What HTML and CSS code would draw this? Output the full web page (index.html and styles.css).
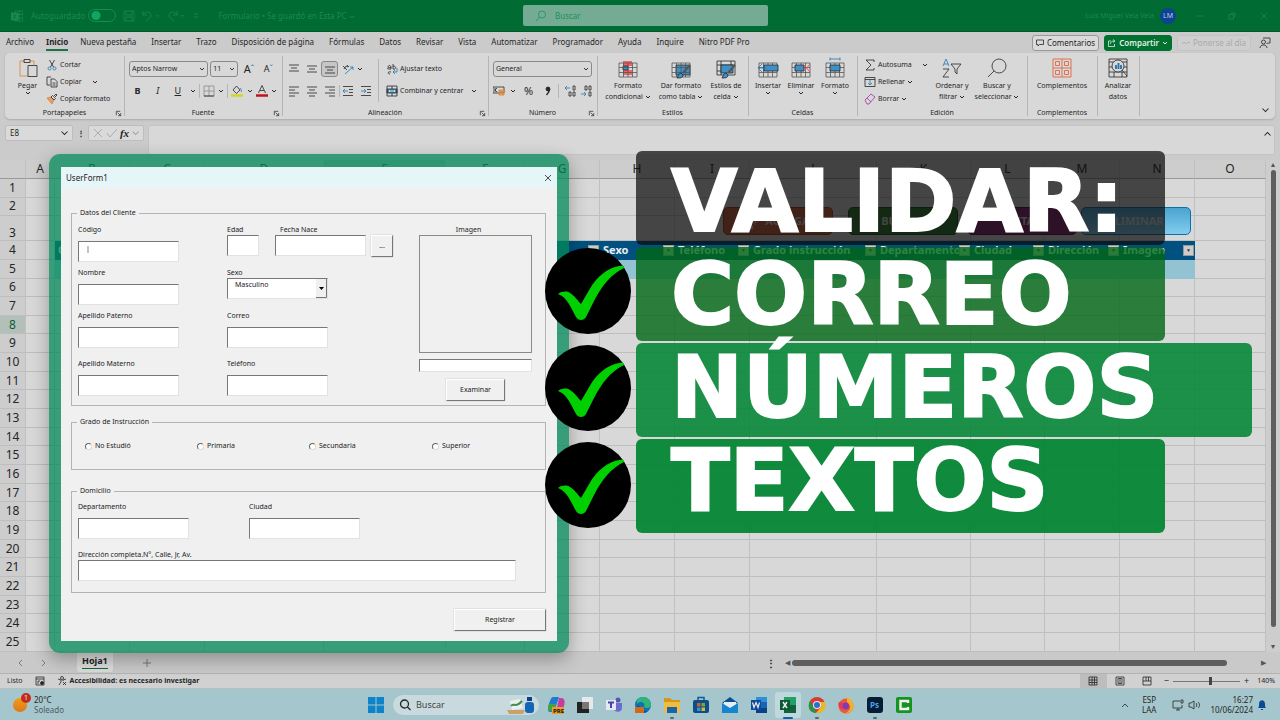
FILE: index.html
```html
<!DOCTYPE html>
<html lang="es">
<head>
    <meta charset="UTF-8">
    <title>Formulario</title>
    <link rel="stylesheet" href="styles.css">
</head>
<body>
    <svg class="sprite">
        <symbol id="chev" viewBox="0 0 6 4"><path d="M1 1l2 2 2-2"/></symbol>
        <symbol id="launch" viewBox="0 0 8 8"><path d="M1.500 6V1.500H6M3 3l3.500 3.500M6.500 3.500v3h-3"/></symbol>
        <symbol id="tick" viewBox="0 0 86 86"><path d="M13 46C17 43 22 43 25 45C30 48 32 52 36 56C41 48 45 39 51 32C60 22 70 17 84 17L79 20C65 27 57 38 49 53L41 69C39 73 33 73 31 69C26 60 22 49 13 46Z"/></symbol>
        <symbol id="cells" viewBox="0 0 20 16"><path d="M1 1h18v14H1zM1 5.500h18M1 10.500h18M5.500 1v14M10 1v14M14.500 1v14"/></symbol>
    </svg>

    <header class="titlebar">
        <div class="title-left">
            <svg class="logo" viewBox="0 0 12 12"><path d="M4 1h8v10H4zM8 1v10M4 4.500h8M4 8h8"/><path class="solid" d="M0 3h7v7H0z"/><path class="cut" d="M2 4.500l3 4M5 4.500l-3 4"/></svg>
            <label class="autosave">Autoguardado <input type="checkbox" class="toggle"></label>
            <button class="plain" aria-label="Guardar"><svg class="i12" viewBox="0 0 12 12"><path d="M1 1h10v10H1zM3 1v4h6V1M3 11V7h6v4"/></svg></button>
            <button class="plain" aria-label="Deshacer"><svg class="i18" viewBox="0 0 18 12"><path d="M1 1v4h4M1 5c2-4 8-4 8 0 0 3-3 4-5 6M14 5l1.500 1.500L17 5"/></svg></button>
            <button class="plain" aria-label="Rehacer"><svg class="i18" viewBox="0 0 18 12"><path d="M10 1v4H6M10 5c-2-4-8-4-8 0 0 3 3 4 5 6M14 5l1.500 1.500L17 5"/></svg></button>
            <button class="plain" aria-label="Personalizar"><svg class="i8" viewBox="0 0 8 8"><path d="M2 2h4M2 4l2 2 2-2"/></svg></button>
            <span class="doc">Formulario • Se guardó en Esta PC <svg class="chev"><use href="#chev"/></svg></span>
        </div>
        <label class="search">
            <svg class="i12" viewBox="0 0 12 12"><circle cx="7" cy="4.500" r="3.500"/><path d="M4.500 7L1 11"/></svg>
            <input type="text" placeholder="Buscar">
        </label>
        <div class="title-right">
            <span>Luis Miguel Vela Vela</span>
            <span class="avatar">LM</span>
            <button class="plain" aria-label="Minimizar"><svg class="i8" viewBox="0 0 8 8"><path d="M1 4h6"/></svg></button>
            <button class="plain" aria-label="Restaurar"><svg class="i8" viewBox="0 0 8 8"><path d="M1 2.500h4.500v4.500H1zM3 1h4v4"/></svg></button>
            <button class="plain" aria-label="Cerrar"><svg class="i8" viewBox="0 0 8 8"><path d="M1 1l6 6M7 1L1 7"/></svg></button>
        </div>
    </header>

    <nav class="tabs">
        <a href="#">Archivo</a>
        <a href="#" class="active">Inicio</a>
        <a href="#">Nueva pestaña</a>
        <a href="#">Insertar</a>
        <a href="#">Trazo</a>
        <a href="#">Disposición de página</a>
        <a href="#">Fórmulas</a>
        <a href="#">Datos</a>
        <a href="#">Revisar</a>
        <a href="#">Vista</a>
        <a href="#">Automatizar</a>
        <a href="#">Programador</a>
        <a href="#">Ayuda</a>
        <a href="#">Inquire</a>
        <a href="#">Nitro PDF Pro</a>
        <div class="tab-actions">
            <button class="pill"><svg class="i8" viewBox="0 0 8 8"><path d="M.5 1h7v4.500H3.500L2 7V5.500H.5z"/></svg>Comentarios</button>
            <button class="pill share"><svg class="i8" viewBox="0 0 8 8"><path d="M3 2H.5v5.500h6V5M2.500 5c0-2 1.500-3 3.500-3M5 .5L7 2 5 3.500"/></svg>Compartir<svg class="chev"><use href="#chev"/></svg></button>
            <button class="pill off" disabled><svg class="i8" viewBox="0 0 8 8"><path d="M0 5l2-2 2 2 2-2 2 1"/></svg>Ponerse al día</button>
            <button class="plain person" aria-label="Presentar"><svg class="i12" viewBox="0 0 12 12"><circle cx="4.500" cy="5" r="2"/><path d="M1 11c0-4 7-4 7 0M4 1h7v5H8.500L7.500 7"/></svg></button>
        </div>
    </nav>

    <section class="ribbon">
        <div class="group g-clip">
            <div class="group-body">
                <button class="big w-paste"><svg class="i20" viewBox="0 0 20 20"><path class="orange" d="M7 3H2v15h8M12 3h4v4"/><path d="M6 1.500h6v3H6zM10 7.500h9v11h-9z"/></svg>Pegar<svg class="chev"><use href="#chev"/></svg></button>
                <div class="stack">
                    <button><svg class="i12" viewBox="0 0 12 12"><path d="M3.500 1l4 7M8.500 1l-4 7"/><circle class="blue" cx="3.500" cy="9.500" r="1.500"/><circle class="blue" cx="8.500" cy="9.500" r="1.500"/></svg>Cortar</button>
                    <button><svg class="i12" viewBox="0 0 12 12"><path d="M4 9H1V1h4M5 3h3.500L11 5.500V11H5zM6.500 7h3M6.500 9h3"/></svg>Copiar<svg class="chev far"><use href="#chev"/></svg></button>
                    <button><svg class="i12" viewBox="0 0 12 12"><path class="orange fill-orange" d="M1 5l4-1 3 3-2 4z"/><path d="M5 4l3 3 1.500-1.500-1-1L11 2 10 1 7.500 3.500l-1-1z"/></svg>Copiar formato</button>
                </div>
            </div>
            <div class="caption">Portapapeles<svg class="launch"><use href="#launch"/></svg></div>
        </div>

        <div class="group g-font">
            <div class="group-body rows">
                <div class="line">
                    <select class="box font-name" aria-label="Fuente"><option>Aptos Narrow</option></select>
                    <select class="box font-size" aria-label="Tamaño"><option>11</option></select>
                    <button class="letter">A<sup>ˆ</sup></button>
                    <button class="letter small">A<sup>ˇ</sup></button>
                </div>
                <div class="line spread">
                    <button class="w18"><b>B</b></button>
                    <button class="w18"><i>I</i></button>
                    <button class="w18"><u>U</u></button>
                    <svg class="chev"><use href="#chev"/></svg>
                    <span class="sep"></span>
                    <button aria-label="Bordes"><svg class="i12" viewBox="0 0 12 12"><path class="light" d="M1 1h10v10H1zM6 1v10M1 6h10"/><path d="M1 11h10"/></svg></button>
                    <svg class="chev"><use href="#chev"/></svg>
                    <span class="sep"></span>
                    <button aria-label="Color de relleno"><svg class="i12" viewBox="0 0 12 12"><path d="M2 5l3.500-4L9 5 5.500 8.500z"/><path class="blue" d="M9 3c1 1 2 3 1 4"/><path class="yellow" d="M0 10.500h12"/></svg></button>
                    <svg class="chev"><use href="#chev"/></svg>
                    <button aria-label="Color de fuente"><svg class="i12" viewBox="0 0 12 12"><path d="M2.500 8L6 0.500 9.500 8M4 5.500h4"/><path class="red" d="M0 10.500h12"/></svg></button>
                    <svg class="chev"><use href="#chev"/></svg>
                </div>
            </div>
            <div class="caption">Fuente<svg class="launch"><use href="#launch"/></svg></div>
        </div>

        <div class="group g-align">
            <div class="group-body">
                <div class="rows align-left">
                    <div class="line">
                        <button class="w18"><svg class="i12" viewBox="0 0 12 12"><path d="M1 2h10M3 5h6M1 8h10"/></svg></button>
                        <button class="w18"><svg class="i12" viewBox="0 0 12 12"><path d="M1 3h10M3 6h6M1 9h10"/></svg></button>
                        <button class="w18 pressed"><svg class="i12" viewBox="0 0 12 12"><path d="M1 4h10M3 7h6M1 10h10"/></svg></button>
                        <button class="w18"><svg class="i12" viewBox="0 0 12 12"><path d="M1 3l4 4M2 6l2-3 2 1M5 2l2 2"/><path class="blue" d="M3 11l8-7M8 4h3v3"/></svg></button>
                        <svg class="chev"><use href="#chev"/></svg>
                    </div>
                    <div class="line">
                        <button class="w18"><svg class="i12" viewBox="0 0 12 12"><path d="M1 2h10M1 5h6M1 8h10M1 11h6"/></svg></button>
                        <button class="w18"><svg class="i12" viewBox="0 0 12 12"><path d="M1 2h10M3 5h6M1 8h10M3 11h6"/></svg></button>
                        <button class="w18"><svg class="i12" viewBox="0 0 12 12"><path d="M1 2h10M5 5h6M1 8h10M5 11h6"/></svg></button>
                        <button class="w18 edge"><svg class="i12" viewBox="0 0 12 12"><path d="M1 1.500h10M7 4.500h4M7 7.500h4M1 10.500h10"/><path class="blue" d="M6 6H1M3 4L1 6l2 2"/></svg></button>
                        <button class="w18"><svg class="i12" viewBox="0 0 12 12"><path d="M1 1.500h10M7 4.500h4M7 7.500h4M1 10.500h10"/><path class="blue" d="M1 6h5M4 4l2 2-2 2"/></svg></button>
                    </div>
                </div>
                <div class="rows align-right">
                    <button><svg class="i12" viewBox="0 0 12 12"><path d="M2 4c0-2 3-2 3 0v2M5 4.500c-3 0-4 0-3 1.500h3M7 1v5c3 1 4-3 0-3M5 9c-3-1-4 2-1 2"/><path class="blue" d="M11 5v4H7M9 7L7 9l2 2"/></svg>Ajustar texto</button>
                    <button><svg class="i12" viewBox="0 0 12 12"><path class="fill-blue" d="M1 4h10v4H1z"/><path d="M1 1h10v10H1zM6 1v3M6 8v3"/><path class="pale" d="M3 6h6M4 5L3 6l1 1M8 5l1 1-1 1"/></svg>Combinar y centrar<svg class="chev far"><use href="#chev"/></svg></button>
                </div>
            </div>
            <div class="caption">Alineación<svg class="launch"><use href="#launch"/></svg></div>
        </div>

        <div class="group g-number">
            <div class="group-body rows">
                <select class="box" aria-label="Formato de número"><option>General</option></select>
                <div class="line spread">
                    <button aria-label="Moneda"><svg class="i12" viewBox="0 0 12 12"><path d="M0 2h11v6H0zM2 3v4M2 5l2-2M2 5l2 2"/><path class="orange fill-orange" d="M6 5h5v2H6zM6 8h5v2H6z"/></svg></button>
                    <svg class="chev"><use href="#chev"/></svg>
                    <button class="w18 sign">%</button>
                    <button class="sign" aria-label="Millares"><svg class="i12" viewBox="0 0 12 12"><circle class="ink" cx="6" cy="4" r="2"/><path class="thick" d="M7.500 4c0 3-1 4-3 6"/></svg></button>
                    <span class="sep"></span>
                    <button aria-label="Aumentar decimales"><svg class="i12" viewBox="0 0 12 12"><path class="blue" d="M6 3H1M3 1L1 3l2 2"/><path d="M9 1h2v4H9zM5 7h2v4H5zM9 7h2v4H9z"/></svg></button>
                    <button aria-label="Disminuir decimales"><svg class="i12" viewBox="0 0 12 12"><path class="blue" d="M1 9h5M4 7l2 2-2 2"/><path d="M5 1h2v4H5zM9 1h2v4H9zM9 7h2v4H9z"/></svg></button>
                </div>
            </div>
            <div class="caption">Número<svg class="launch"><use href="#launch"/></svg></div>
        </div>

        <div class="group g-styles">
            <div class="group-body">
                <button class="big w56"><svg class="i20" viewBox="0 -2 20 20"><path class="fill-red" d="M5 1h9v5H5zM5 10h9v5H5z"/><path class="fill-blue" d="M5 6h5v4H5z"/><use href="#cells"/></svg>Formato<span>condicional <svg class="chev"><use href="#chev"/></svg></span></button>
                <button class="big w50"><svg class="i20" viewBox="0 -2 20 20"><path class="fill-blue" d="M5 5h14v10H5z"/><use href="#cells"/><path class="brush" d="M19 5l-7 8"/><path class="fill-blue" d="M6 18c1-1 1-5 4-5l2 2c0 3-3 3-6 3z"/></svg>Dar formato<span>como tabla <svg class="chev"><use href="#chev"/></svg></span></button>
                <button class="big w40"><svg class="i20" viewBox="0 -2 20 20"><path d="M1 1h18v14H1zM5 1v4M1 5h18M5 5v10M15 1v4M1 11h4"/><path class="fill-blue" d="M5 5h12v8H5z"/><path class="brush" d="M19 5l-7 8"/><path class="fill-blue" d="M6 18c1-1 1-5 4-5l2 2c0 3-3 3-6 3z"/></svg>Estilos de<span>celda <svg class="chev"><use href="#chev"/></svg></span></button>
            </div>
            <div class="caption">Estilos</div>
        </div>

        <div class="group g-cells">
            <div class="group-body">
                <button class="big w34"><svg class="i20" viewBox="0 -2 20 20"><use href="#cells"/><path class="fill-blue" d="M6 5h14v6H6z"/><path class="blue" d="M9 8H0M4 4L0 8l4 4"/></svg>Insertar<svg class="chev"><use href="#chev"/></svg></button>
                <button class="big w32"><svg class="i20" viewBox="0 -2 20 20"><use href="#cells"/><path class="fill-blue" d="M4 5h9v6H4z"/><path class="redline" d="M12 4l7 8M19 4l-7 8"/></svg>Eliminar<svg class="chev"><use href="#chev"/></svg></button>
                <button class="big w36"><svg class="i20" viewBox="0 -2 20 20"><use href="#cells"/><path class="fill-blue" d="M5 5h10v6H5z"/><path class="blue" d="M5-1h10M5-2.500v3M15-2.500v3"/></svg>Formato<svg class="chev"><use href="#chev"/></svg></button>
            </div>
            <div class="caption">Celdas</div>
        </div>

        <div class="group g-edit">
            <div class="group-body">
                <div class="stack edit-stack">
                    <button><svg class="i12" viewBox="0 0 12 12"><path d="M10 3V1H2l5 5-5 5h8V9"/></svg>Autosuma<svg class="chev far"><use href="#chev"/></svg></button>
                    <button><svg class="i12" viewBox="0 0 12 12"><path d="M1 1.500h10v9H1zM1 3.500h10"/><path class="blue" d="M6 4v5M4 7l2 2 2-2"/></svg>Rellenar <svg class="chev"><use href="#chev"/></svg></button>
                    <button><svg class="i12" viewBox="0 0 12 12"><path class="purple" d="M1 7l6-6 4 3-6 7H3zM3 5l4 4"/></svg>Borrar <svg class="chev"><use href="#chev"/></svg></button>
                </div>
                <button class="big w40"><svg class="i20" viewBox="0 0 20 20"><path class="blue" d="M1 8l3-7 3 7M2 6h4"/><path d="M1 11h6l-6 8h6M9 6h10l-4 5v5l-2-2v-3z"/></svg>Ordenar y<span>filtrar <svg class="chev"><use href="#chev"/></svg></span></button>
                <button class="big w50"><svg class="i20" viewBox="0 0 20 20"><circle cx="12" cy="8" r="7"/><path d="M7 13l-6 6"/></svg>Buscar y<span>seleccionar <svg class="chev"><use href="#chev"/></svg></span></button>
            </div>
            <div class="caption">Edición</div>
        </div>

        <div class="group g-addins">
            <div class="group-body center">
                <button class="big"><svg class="i20" viewBox="0 0 20 20"><path class="coral" d="M1 1h18v18H1zM10 1v18M1 10h18M3.500 3.500h4v4h-4zM12.500 3.500h4v4h-4zM3.500 12.500h4v4h-4zM12.500 12.500h4v4h-4z"/></svg>Complementos</button>
            </div>
            <div class="caption">Complementos</div>
        </div>

        <div class="group g-analyze">
            <div class="group-body center">
                <button class="big"><svg class="i20" viewBox="0 0 20 20"><path d="M1 1h18v18H1zM1 4h18M1 9h18M1 14h18M6 14v5M14 14v5"/><circle class="lens" cx="10" cy="8" r="6"/><path d="M14 12l5 6"/><path class="bluebar" d="M8 11V7M10.500 11V5M13 11V7"/></svg>Analizar<span>datos</span></button>
            </div>
        </div>
        <button class="plain collapse" aria-label="Contraer"><svg class="chev wide"><use href="#chev"/></svg></button>
    </section>

    <section class="formula">
        <div class="namebox">E8 <svg class="chev wide"><use href="#chev"/></svg></div>
        <span class="dots">⋮</span>
        <div class="fx">
            <svg class="i12" viewBox="0 0 12 12"><path d="M2 2l8 8M10 2l-8 8"/></svg>
            <svg class="i12" viewBox="0 0 12 12"><path d="M1 6l3 4 7-8"/></svg>
            <em>fx</em>
            <svg class="chev wide"><use href="#chev"/></svg>
        </div>
        <div class="input-line"><svg class="chev wide up"><use href="#chev"/></svg></div>
    </section>

    <main class="sheet">
        <table class="grid">
            <colgroup>
                <col class="c-num"><col class="c-a"><col class="c-s"><col class="c-s"><col class="c-d"><col class="c-e"><col class="c-f">
                <col class="c-s"><col class="c-s"><col class="c-s"><col class="c-j"><col class="c-k"><col class="c-l"><col class="c-s"><col class="c-s"><col>
            </colgroup>
            <thead>
                <tr><th></th><th>A</th><th>B</th><th>C</th><th>D</th><th class="picked">E</th><th>F</th><th>G</th><th>H</th><th>I</th><th>J</th><th>K</th><th>L</th><th>M</th><th>N</th><th>O</th></tr>
            </thead>
            <tbody id="rows"></tbody>
        </table>
        <div class="vscroll"><span>▲</span><div></div><span>▼</span></div>
        <button class="shape agregar"><svg class="i20" viewBox="0 0 20 20"><circle cx="8" cy="6" r="4"/><path d="M2 18c0-9 12-9 12 0zM16 8v6M13 11h6"/></svg>AGREGAR</button>
        <button class="shape buscar">BUSCAR</button>
        <button class="shape editar">EDITAR</button>
        <button class="shape eliminar">ELIMINAR</button>
    </main>

    <div class="sheet-tabs">
        <button class="plain" aria-label="Anterior"><svg class="i8" viewBox="0 0 8 8"><path d="M5 1L2 4l3 3"/></svg></button>
        <button class="plain" aria-label="Siguiente"><svg class="i8" viewBox="0 0 8 8"><path d="M3 1l3 3-3 3"/></svg></button>
        <a href="#" class="sheet-tab"><span>Hoja1</span></a>
        <button class="plain" aria-label="Hoja nueva"><svg class="i8" viewBox="0 0 8 8"><path d="M4 0v8M0 4h8"/></svg></button>
        <div class="hscroll"><b>⋮</b><span>◀</span><div></div><span class="end">▶</span></div>
    </div>

    <div class="status">
        <span>Listo</span>
        <svg class="i10" viewBox="0 0 10 10"><path d="M1 1h8v8H1zM1 3h8M3 8V5h2"/><circle class="ink" cx="7" cy="7" r="1.500"/></svg>
        <span class="access"><svg class="i10" viewBox="0 0 10 10"><circle cx="5" cy="2" r="1.500"/><path d="M1 3l3 1v2L2 9M9 3L6 4v1M6 6l3 3M9 6L6 9"/></svg>Accesibilidad: es necesario investigar</span>
        <div class="views">
            <button class="view on" aria-label="Normal"><svg class="i10" viewBox="0 0 10 10"><path d="M1 1h8v8H1zM1 4h8M1 6.500h8M4 1v8M6.500 1v8"/></svg></button>
            <button class="view" aria-label="Diseño de página"><svg class="i10" viewBox="0 0 10 10"><path d="M1 1h8v8H1zM3 2.500h4v5H3zM4 4h2M4 6h2"/></svg></button>
            <button class="view" aria-label="Salto de página"><svg class="i10" viewBox="0 0 10 10"><path d="M1 1h8v8H1zM4 1v4h5M6.500 1v4M1 5h3"/></svg></button>
            <label class="zoom">− <input type="range" min="0" max="100" value="57" aria-label="Zoom"> +</label>
            <span>140%</span>
        </div>
    </div>

    <footer class="taskbar">
        <div class="weather">
            <div class="sun"><span>1</span></div>
            <div>20°C<br><small>Soleado</small></div>
        </div>
        <div class="apps">
            <svg class="app" viewBox="0 0 18 18"><path fill="#0d84c9" d="M1 1h7.500v7.500H1zM9.500 1H17v7.500H9.500zM1 9.500h7.500V17H1zM9.500 9.500H17V17H9.500z"/></svg>
            <label class="task-search">
                <svg class="i12" viewBox="0 0 12 12"><circle cx="5.500" cy="5" r="4"/><path d="M8.500 8l3 3"/></svg>
                <input type="text" placeholder="Buscar">
                <svg class="art" viewBox="0 0 28 18"><path fill="#c9a26b" d="M0 14h18l-2 4H2z"/><path fill="#eee" d="M3 5l10-2 3 9-11 2z"/><path fill="none" stroke="#3f8f50" stroke-width="2" d="M4 10c3-4 4 3 11-5"/><rect x="18" y="6" width="9" height="11" rx="3" fill="#1565b5"/><path fill="#0b3f8c" d="M20 1h5v4h-5z"/></svg>
            </label>
            <svg class="app" viewBox="0 0 18 18"><path fill="#1f7ad1" d="M6 1h6l-3 9-3 6H3C0 16 1 11 2 8s2-7 4-7z"/><path fill="#46a23c" d="M2 8h7l-2 7H3C0 15 1 11 2 8z"/><path fill="#c43e9a" d="M12 2h2c4 0 4 4 3 8s-3 6-5 6H9z"/><path fill="#e9a02a" d="M5 11h12v7H5z"/><text class="tiny" x="6" y="17">PRE</text></svg>
            <svg class="app" viewBox="0 0 18 18"><path fill="#e8e8e8" d="M6 1h11v12H6z"/><path fill="#222" d="M1 6h5v7h7v4H1z"/><path fill="#777" d="M6 6h7v7H6z"/></svg>
            <svg class="app" viewBox="0 0 18 18"><circle cx="13" cy="4" r="2.500" fill="#5457b8"/><path fill="#6a6dce" d="M8 7h9v5c0 5-8 5-9 0z"/><path fill="#e7e7f2" d="M1 4h10v10H1z"/><path fill="none" stroke="#4447a5" stroke-width="2" d="M3 6.500h6M6 6.500V12"/></svg>
            <svg class="app" viewBox="0 0 18 18"><circle cx="9" cy="9" r="8" fill="#0a72ba"/><path fill="#31b477" d="M3 4c5-6 14-2 14 5 0 3-5 4-7 2 2-4-3-7-7-3z"/><path fill="#0c4b8c" d="M5 9c0 5 4 7 9 6-4 4-11 1-11-4z"/><path fill="#cf6a19" d="M1 11h9v6H1z"/></svg>
            <span class="run"><svg class="app" viewBox="0 0 18 18"><path fill="#d8941b" d="M1 2h6l2 2h8v4H1z"/><path fill="#f0bd40" d="M1 6h16v11H1z"/><path fill="#1866a8" d="M4 11h10v6H4z"/></svg></span>
            <svg class="app" viewBox="0 0 18 18"><path fill="none" stroke="#0d5d9e" stroke-width="1.500" d="M6 4V1.500h6V4"/><rect x="1" y="4" width="16" height="13" rx="2" fill="#0b4f86"/><path fill="#e0572f" d="M5 7h3.500v3.500H5z"/><path fill="#73a83b" d="M9.500 7H13v3.500H9.500z"/><path fill="#2c95d4" d="M5 11.500h3.500V15H5z"/><path fill="#e8b32c" d="M9.500 11.500H13V15H9.500z"/></svg>
            <svg class="app" viewBox="0 0 18 18"><path fill="#0a4f93" d="M1 7l8-6 8 6z"/><path fill="#e6eef2" d="M3 6h12v6H3z"/><path fill="#1585cf" d="M1 7l8 5 8-5v10H1z"/></svg>
            <svg class="app" viewBox="0 0 18 18"><path fill="#2e8fdb" d="M6 1h11v5H6z"/><path fill="#1764b4" d="M6 6h11v6H6z"/><path fill="#0d3f85" d="M6 12h11v5H6z"/><path fill="#0f4b9c" d="M1 4h10v10H1z"/><path fill="none" stroke="#eee" stroke-width="1.200" d="M2.500 6.500L4 11.500l2-5 2 5 1.500-5"/></svg>
            <span class="run current"><svg class="app" viewBox="0 0 18 18"><path fill="#23a067" d="M5 1h12v8H5z"/><path fill="#11623a" d="M5 9h12v8H5z"/><path fill="#0c5a31" d="M1 4h10v10H1z"/><path fill="none" stroke="#eee" stroke-width="1.500" d="M4 6l4 6M8 6l-4 6"/></svg></span>
            <span class="run"><svg class="app" viewBox="0 0 18 18"><circle cx="9" cy="9" r="8" fill="#d93c2c"/><path fill="#2b9247" d="M2 5l5 8 1 4C1 17-1 10 2 5z"/><path fill="#e8b923" d="M17 6H9l4 5-5 6c8 1 11-6 9-11z"/><circle cx="9" cy="9" r="4" fill="#e8e8e8"/><circle cx="9" cy="9" r="3" fill="#2a6fd0"/></svg></span>
            <svg class="app" viewBox="0 0 18 18"><circle cx="9" cy="10" r="7.500" fill="#ec5a35"/><path fill="#f3b02b" d="M10 1c6 3 8 8 6 12-2 3-4 4-7 4 5-3 6-7 1-11z"/><circle cx="8.500" cy="10" r="3.500" fill="#7b3fb5"/><path fill="#e8355a" d="M2 6c2 0 3 1 5 1-2 1-2 5 1 6-4 2-8-3-6-7z"/></svg>
            <span class="run"><svg class="app" viewBox="0 0 18 18"><rect x="1" y="1" width="16" height="16" rx="3" fill="#071c35"/><text class="ps" x="4" y="12">Ps</text></svg></span>
            <svg class="app" viewBox="0 0 18 18"><rect x="1" y="1" width="16" height="16" rx="2" fill="#15931f"/><path fill="none" stroke="#eee" stroke-width="2.500" d="M13 7V5H5.500v8H13v-2"/></svg>
        </div>
        <div class="tray">
            <svg class="i10" viewBox="0 0 10 10"><path d="M2 7l3-3 3 3"/></svg>
            <div class="lang">ESP<br>LAA</div>
            <svg class="i12" viewBox="0 0 12 12"><path d="M8 2H1v7h9V6M4 11h4M6 9v2M9 1h2v3H9z"/></svg>
            <svg class="i12" viewBox="0 0 12 12"><path d="M1 4h2l3-2v8L3 8H1zM8 4c1 1 1 3 0 4M10 3c2 2 2 4 0 6"/></svg>
            <div class="clock">16:27<br>10/06/2024</div>
            <svg class="bell" viewBox="0 0 10 12"><path d="M1 9c1-1 1-2 1-4 0-5 6-5 6 0 0 2 0 3 1 4zM4 10h2v1H4z"/></svg>
        </div>
    </footer>

    <div class="frame">
        <form class="userform">
            <div class="form-title">UserForm1 <button type="button" class="plain" aria-label="Cerrar"><svg class="i8" viewBox="0 0 8 8"><path d="M1 1l6 6M7 1L1 7"/></svg></button></div>
            <fieldset class="client">
                <legend>Datos del Cliente</legend>
                <div class="field"><label for="codigo">Código</label><input id="codigo" type="text" value="|"></div>
                <div class="trio">
                    <div class="field tight age"><label for="edad">Edad</label><input id="edad" type="text"></div>
                    <div class="field tight birth"><label for="fecha">Fecha Nace</label><input id="fecha" type="text"></div>
                    <button type="button" class="raised pick">...</button>
                </div>
                <div class="picture">
                    <label for="ruta">Imagen</label>
                    <div class="preview"></div>
                    <input id="ruta" type="text">
                    <button type="button" class="raised">Examinar</button>
                </div>
                <div class="field"><label for="nombre">Nombre</label><input id="nombre" type="text"></div>
                <div class="field tight"><label for="sexo">Sexo</label><select id="sexo"><option>Masculino</option></select></div>
                <div class="field"><label for="paterno">Apellido Paterno</label><input id="paterno" type="text"></div>
                <div class="field"><label for="correo">Correo</label><input id="correo" type="text"></div>
                <div class="field"><label for="materno">Apellido Materno</label><input id="materno" type="text"></div>
                <div class="field"><label for="telefono">Teléfono</label><input id="telefono" type="text"></div>
            </fieldset>
            <fieldset class="grade">
                <legend>Grado de Instrucción</legend>
                <label><input type="radio" name="grado">No Estudió</label>
                <label><input type="radio" name="grado">Primaria</label>
                <label><input type="radio" name="grado">Secundaria</label>
                <label><input type="radio" name="grado">Superior</label>
            </fieldset>
            <fieldset class="home">
                <legend>Domicilio</legend>
                <div class="field"><label for="depto">Departamento</label><input id="depto" type="text"></div>
                <div class="field"><label for="ciudad">Ciudad</label><input id="ciudad" type="text"></div>
                <div class="field tight address"><label for="direccion">Dirección completa.N°, Calle, Jr, Av.</label><input id="direccion" type="text"></div>
            </fieldset>
            <button type="button" class="raised register">Registrar</button>
        </form>
    </div>

    <div class="headline">
        <div class="bands"><div class="dark"></div><div class="green1"></div><div class="green2"></div><div class="green3"></div></div>
        <h1>VALIDAR:<br>CORREO<br>NÚMEROS<br>TEXTOS</h1>
    </div>
    <div class="checks">
        <svg><use href="#tick"/></svg>
        <svg><use href="#tick"/></svg>
        <svg><use href="#tick"/></svg>
    </div>

    <script src="script.js"></script>
</body>
</html>
```
FILE: styles.css
```css
* {
    box-sizing: border-box;
}

body {
    margin: 0;
    height: 100vh;
    display: flex;
    flex-direction: column;
    overflow: hidden;
    position: relative;
    background: #cbcbcb;
    color: #262626;
    font-family: "Noto Sans", sans-serif;
    font-size: 7px;
    line-height: 10px;
}

button, input, select {
    font: inherit;
    color: inherit;
    padding: 0;
    margin: 0;
    border: 0;
    background: none;
}

a {
    color: inherit;
    text-decoration: none;
}

svg {
    fill: none;
    stroke: currentColor;
    stroke-width: 0.8;
    flex-shrink: 0;
}

.sprite { position: absolute; width: 0; height: 0; }
.i8 { width: 8px; height: 8px; }
.i10 { width: 10px; height: 10px; }
.i12 { width: 12px; height: 12px; }
.i18 { width: 18px; height: 12px; }
.i20 { width: 20px; height: 20px; }
.i20 use { width: 20px; height: 16px; stroke: #555; }
.chev { width: 6px; height: 4px; stroke-width: 1; }
.chev.wide { width: 9px; height: 6px; stroke-width: 0.7; }
.chev.up { transform: rotate(180deg); }
.launch { width: 7px; height: 7px; }
.plain { display: flex; align-items: center; }

.orange { stroke: #dc8436; }
.fill-orange { fill: #e0a068; }
.blue { stroke: #2079b5; }
.fill-blue { fill: #3e91c6; }
.fill-red { fill: #ee6468; stroke: none; }
.redline { stroke: #e25a5a; stroke-width: 1; }
.yellow { stroke: #d5d520; stroke-width: 2.5; }
.red { stroke: #c4121c; stroke-width: 2.5; }
.purple { stroke: #a033a0; }
.coral { stroke: #e0704f; stroke-width: 1; }
.light { stroke: #8c8c8c; }
.pale { stroke: #e5e5e5; }
.ink { fill: #262626; }
.thick { stroke-width: 1.5; }
.brush { stroke: #555; stroke-width: 2; }
.lens { fill: #d8d8d8; }
.bluebar { stroke: #1e6fae; stroke-width: 1.8; }

/* title bar */
.titlebar {
    height: 32px;
    flex-shrink: 0;
    display: grid;
    grid-template-columns: 1fr 245px 1fr;
    align-items: center;
    padding-left: 11px;
    background: #006b33;
    color: #1d8a50;
    border-bottom: 1px solid #00592a;
    font-size: 8px;
}

.title-left { display: flex; align-items: center; gap: 7px; }
.logo { width: 12px; height: 12px; }
.logo .solid { fill: #1d8a50; }
.logo .cut { stroke: #006b33; }
.autosave { display: flex; align-items: center; gap: 3px; margin-left: 1px; }
.doc { margin-left: 11px; }

.toggle {
    appearance: none;
    width: 28px;
    height: 13px;
    border: 1px solid #1d8a50;
    border-radius: 7px;
    background: radial-gradient(circle at 7px 50%, #12a368 4px, transparent 5px);
}

.search {
    height: 21px;
    display: flex;
    align-items: center;
    gap: 8px;
    padding-left: 12px;
    border-radius: 2px;
    background: #74ab93;
}

.search input { flex: 1; min-width: 0; }
.search svg { color: #1d9060; }
.search ::placeholder { color: #1d9060; }
.title-right { display: flex; align-items: center; justify-content: flex-end; gap: 24px; padding-right: 12px; font-size: 7px; }

.avatar {
    width: 16px;
    height: 16px;
    margin: 0 -4px 0 -18px;
    border-radius: 50%;
    background: #0d4391;
    color: #b7cfe8;
    text-align: center;
    line-height: 16px;
}

/* tabs */
.tabs {
    height: 21px;
    flex-shrink: 0;
    display: flex;
    align-items: center;
    gap: 15px;
    padding: 0 9px 0 6px;
    font-size: 8px;
    white-space: nowrap;
}

.tabs a { line-height: 15px; border-bottom: 2px solid transparent; }
.tabs .active { font-weight: bold; margin: 0 -3px; border-color: #217346; }
.tab-actions { margin-left: auto; display: flex; align-items: center; gap: 5px; }

.pill {
    display: flex;
    align-items: center;
    gap: 3px;
    height: 16px;
    padding: 0 3px;
    border: 1px solid #999;
    border-radius: 3px;
    background: #dadada;
}

.share { background: #00712f; border-color: #00712f; color: #e4efe8; font-weight: 600; }
.off { padding: 0 4px; border-color: #c4c4c4; background: #cfcfcf; color: #a9a9a9; }
.person { margin-left: 3px; }

/* ribbon */
.ribbon {
    flex-shrink: 0;
    display: flex;
    height: 66px;
    margin: 0 5px;
    position: relative;
    border-radius: 5px;
    background: #d8d8d8;
    box-shadow: 0 1px 2px #aaa;
}

.group { display: flex; flex-direction: column; padding: 4px 0 1px; }
.group + .group, .collapse { background: linear-gradient(#b5b5b5, #b5b5b5) 0 3px / 1px 60px no-repeat; }
.g-clip { width: 119px; }
.g-font { width: 158px; }
.g-align { width: 206px; }
.g-number { width: 109px; }
.g-styles { width: 151px; }
.g-cells { width: 109px; }
.g-edit { width: 170px; }
.g-addins { width: 70px; }
.g-analyze { width: 42px; }
.group-body { flex: 1; display: flex; }
.group-body.center { justify-content: center; }
.g-styles .group-body, .g-cells .group-body { padding-left: 3px; }

.caption {
    height: 10px;
    display: flex;
    align-items: center;
    justify-content: center;
    padding: 0 2px;
}

.caption .launch { margin-left: auto; }
.caption:has(.launch)::before { content: ""; width: 7px; margin-right: auto; }

.big {
    display: flex;
    flex-direction: column;
    align-items: center;
    padding-top: 1px;
    white-space: nowrap;
    line-height: 11px;
}

.big .i20 { margin-bottom: 2px; overflow: visible; }
.w-paste { width: 41px; padding-left: 4px; }
.w32 { width: 32px; }
.w34 { width: 34px; }
.w36 { width: 36px; }
.w40 { width: 40px; }
.w50 { width: 50px; }
.w56 { width: 56px; }
.w18 { width: 17px; text-align: center; }

.stack { display: flex; flex-direction: column; justify-content: space-between; height: 50px; }
.stack button { display: flex; align-items: center; gap: 2px; height: 16px; }
.stack .far { margin-left: 8px; }
.edit-stack { width: 75px; padding-left: 7px; }
.rows { display: flex; flex-direction: column; gap: 6px; padding: 4px 5px 0; }
.line { display: flex; align-items: center; height: 16px; gap: 2px; }
.line button { display: flex; align-items: center; justify-content: center; }
.line.spread { justify-content: space-between; font-size: 9px; }
.line .letter { font-size: 11px; width: 18px; }
.line .small { font-size: 9px; }
.letter sup { font-size: 8px; color: #2079b5; }
.line .sign { font-size: 11px; }
.line .pressed { height: 16px; border: 1px solid #888; border-radius: 3px; background: #c6c6c6; }
.sep { width: 1px; height: 14px; background: #b5b5b5; }

.box {
    appearance: none;
    height: 16px;
    width: 100%;
    padding: 0 2px;
    border: 1px solid #8a8a8a;
    border-radius: 3px;
    background: url("data:image/svg+xml,%3Csvg xmlns='http://www.w3.org/2000/svg' viewBox='0 0 6 4'%3E%3Cpath d='M1 1l2 2 2-2' fill='none' stroke='%23333'/%3E%3C/svg%3E") right 2px center / 6px 4px no-repeat;
}

.line .font-name { width: 82px; }
.line .font-size { width: 29px; }
.align-left { width: 96px; padding: 4px 3px 0; }
.align-left .line { gap: 1px; }
.align-right { padding: 2px 0 0 7px; margin: 2px 0 6px; border-left: 1px solid #b5b5b5; }
.align-right button { display: flex; align-items: center; gap: 2px; height: 16px; white-space: nowrap; }
.align-right .far { margin-left: 6px; }
.edge { border-left: 1px solid #b5b5b5; }
.collapse { flex: 1; justify-content: flex-end; padding-right: 5px; padding-top: 48px; }

/* formula bar */
.formula {
    flex-shrink: 0;
    display: flex;
    align-items: flex-start;
    height: 30px;
    margin: 6px 5px 5px;
    font-size: 8px;
}

.namebox, .fx {
    display: flex;
    align-items: center;
    justify-content: space-between;
    height: 16px;
    padding: 0 3px;
    border: 1px solid #bdbdbd;
    border-radius: 2px;
    background: #dadada;
}

.namebox { width: 68px; padding-left: 4px; }
.dots { width: 15px; text-align: center; line-height: 16px; font-weight: bold; }
.fx { width: 56px; color: #a0a0a0; }
.fx em { color: #222; font: italic bold 11px "Liberation Serif", serif; }

.input-line {
    flex: 1;
    align-self: stretch;
    margin-left: 4px;
    padding: 3px 2px 0;
    border: 1px solid #c4c4c4;
    border-radius: 3px;
    background: #d8d8d8;
    text-align: right;
}

/* sheet */
.sheet {
    flex: 1;
    min-height: 0;
    display: flex;
    position: relative;
    background: #cdcdcd;
}

.grid {
    flex: 1;
    table-layout: fixed;
    border-spacing: 0;
    height: 100%;
    width: 100%;
    background: #d8d8d8;
    font-size: 12px;
    line-height: 14px;
}

.grid tr { height: 18px; }
.grid thead tr { height: 19px; }
.grid .tall { height: 24px; }
.grid th, .grid td { padding: 0; border-right: 1px solid #c0c0c0; border-bottom: 1px solid #bebebe; }
.grid th { font-weight: normal; background: #cdcdcd; }
.grid thead th { border-bottom-color: #999; }
.grid .tall th { vertical-align: bottom; }
.grid .picked { background: #b3bfb9; color: #0f5c36; }
.c-num { width: 26px; }
.c-a { width: 29px; }
.c-s { width: 75px; }
.c-d { width: 119px; }
.c-e { width: 122px; }
.c-f { width: 79px; }
.c-j { width: 127px; }
.c-k { width: 94px; }
.c-l { width: 74px; }

.grid .head {
    background: #00517f;
    border-color: #00517f;
    color: #e8eef2;
    font-weight: bold;
    font-size: 11px;
}

.head div { display: flex; align-items: center; justify-content: space-between; padding-left: 3px; white-space: nowrap; }
.head span { width: 0; }
.head button { width: 11px; height: 11px; background: #ccc; border: 1px solid #999; color: #333; font-size: 5px; line-height: 8px; }
.grid .data { background: #93c3d2; border-color: #93c3d2; }

.vscroll { width: 14px; display: flex; flex-direction: column; align-items: center; color: #555; }
.vscroll div { width: 5px; flex: 1; margin-bottom: 15px; border-radius: 3px; background: #5e5e5e; }

.shape {
    position: absolute;
    top: 47px;
    width: 110px;
    height: 28px;
    display: flex;
    align-items: center;
    justify-content: center;
    gap: 6px;
    border: 1px solid;
    border-radius: 5px;
    color: #d8d8d8;
    font-size: 11px;
    font-weight: bold;
}

.shape svg { fill: currentColor; }
.agregar { left: 723px; background: #c96142; border-color: #a83a1c; }
.buscar { left: 848px; background: #2d7a2f; border-color: #124f16; }
.editar { left: 967px; background: #86276f; border-color: #5c0d4d; }
.eliminar { left: 1081px; background: linear-gradient(#4ba3d0, #82cdee); border-color: #0d71a8; }

/* sheet tabs and status bar */
.sheet-tabs {
    height: 22px;
    flex-shrink: 0;
    display: flex;
    align-items: center;
    gap: 14px;
    padding: 0 14px 0 17px;
    border-bottom: 1px solid #b3b3b3;
    background: #c9c9c9;
    color: #666;
}

.sheet-tab { align-self: flex-start; margin: 0 16px 0 16px; padding: 2px 5px 3px; background: #dcdcdc; color: #222; font-weight: bold; font-size: 9px; border-radius: 0 0 3px 3px; }
.sheet-tab span { display: block; line-height: 14px; border-bottom: 1px solid #0f6b38; }
.hscroll { margin-left: auto; width: 40%; display: flex; align-items: center; gap: 2px; color: #555; }
.hscroll b { font-size: 10px; margin-right: 7px; color: #222; }
.hscroll div { flex: 1; height: 6px; border-radius: 3px; background: #5e5e5e; }
.hscroll .end { margin-left: 32px; }

.status {
    height: 15px;
    flex-shrink: 0;
    display: flex;
    align-items: center;
    gap: 12px;
    padding: 0 5px 0 7px;
    background: #d1d1d1;
    border-bottom: 1px solid #b5c2c4;
}

.access { display: flex; align-items: center; gap: 3px; font-weight: bold; }
.views { margin-left: auto; display: flex; align-items: center; height: 100%; }
.view { width: 27px; height: 100%; display: flex; align-items: center; justify-content: center; }
.view.on { background: #bdbdbd; }
.zoom { display: flex; align-items: center; gap: 4px; margin: 0 8px 0 3px; font-size: 9px; }
.zoom input { appearance: none; width: 67px; height: 10px; background: linear-gradient(#777, #777) center / 100% 1px no-repeat; }
.zoom input::-webkit-slider-thumb { appearance: none; width: 3px; height: 8px; background: #444; }

/* taskbar */
.taskbar {
    height: 31px;
    flex-shrink: 0;
    display: grid;
    grid-template-columns: 1fr auto 1fr;
    align-items: center;
    padding: 0 13px;
    background: #a6c6cd;
    font-size: 8px;
}

.weather { display: flex; align-items: center; gap: 7px; }
.weather small { font-size: 8px; color: #4e6064; }
.sun { position: relative; width: 14px; height: 14px; border-radius: 50%; background: linear-gradient(#f09c20, #e07813); }
.sun span { position: absolute; top: -5px; right: -4px; width: 10px; height: 10px; border-radius: 50%; background: #c42b1c; color: #eee; text-align: center; font-size: 7px; }
.apps { display: flex; align-items: center; gap: 11px; }
.app { width: 18px; height: 18px; stroke: none; }
.app text { fill: #111; font-weight: bold; stroke: none; }
.tiny { font-size: 6px; }
.app .ps { font-size: 8px; fill: #4aa5e8; }

.task-search {
    display: flex;
    align-items: center;
    gap: 5px;
    width: 146px;
    height: 20px;
    margin: 0 -3px;
    padding: 0 4px 0 6px;
    border-radius: 10px;
    background: #c9dade;
    font-size: 9px;
}

.task-search input { flex: 1; min-width: 0; }
.task-search ::placeholder { color: #444; }
.task-search .i12 { stroke-width: 1.3; }
.art { width: 28px; height: 18px; stroke: none; }
.run { display: flex; position: relative; }
.run::after { content: ""; position: absolute; left: 7px; bottom: -5px; width: 4px; height: 2px; border-radius: 1px; background: #56696d; }
.run.current { margin: 0 -4px; padding: 4px; border-radius: 3px; background: #c0d7dc; }
.run.current::after { left: 8px; bottom: -1px; width: 10px; background: #1262a3; }
.tray { display: flex; align-items: center; justify-content: flex-end; gap: 4px; }
.lang { text-align: center; margin: 0 12px 0 8px; }
.clock { text-align: right; margin-left: 6px; }
.bell { width: 10px; height: 12px; fill: #0b4a92; stroke: none; }

/* user form */
.frame {
    position: absolute;
    left: 49px;
    top: 154px;
    width: 520px;
    padding: 13px 12px 12px;
    border-radius: 11px;
    background: rgba(0, 138, 88, 0.74);
    box-shadow: 0 6px 18px rgba(0, 0, 0, 0.3);
}

.userform { display: flex; flex-direction: column; padding: 0 11px 10px 10px; background: #f0f0f0; color: #222; }

.form-title {
    display: flex;
    align-items: center;
    justify-content: space-between;
    height: 21px;
    margin: 0 -11px 20px -10px;
    padding: 0 5px;
    background: #e6f5f8;
    font-size: 8px;
}

fieldset { min-width: 0; margin: 0; padding: 0 6px; border: 1px solid #b4b4b4; }
legend { padding: 0 3px; margin-left: -1px; }

.field { display: flex; flex-direction: column; gap: 6px; }
.field.tight { gap: 0; }

.userform input[type="text"], .userform select {
    width: 100%;
    height: 21px;
    padding: 0 7px 7px;
    background-color: #fff;
    border: 1px solid #e2e2e2;
    border-top-color: #777;
    border-left-color: #777;
}

.userform select {
    appearance: none;
    background-image: url("data:image/svg+xml,%3Csvg xmlns='http://www.w3.org/2000/svg' viewBox='0 0 11 19'%3E%3Cpath d='M0 0h11v19H0z' fill='%23f0f0f0'/%3E%3Cpath d='M10.500 0v18.500H0' fill='none' stroke='%23777'/%3E%3Cpath d='M3 8h5L5.500 11z'/%3E%3C/svg%3E");
    background-position: right;
    background-size: 11px 19px;
    background-repeat: no-repeat;
}

.client {
    display: grid;
    grid-template-columns: 149px 1fr 113px;
    grid-template-rows: 43px 43px 48px 46px;
    padding: 7px 13px 0 6px;
}

.client > .field { width: 101px; }
.trio { display: flex; align-items: flex-start; }
.age { width: 32px; margin-right: 16px; }
.birth { width: 91px; }
.birth label { padding-left: 5px; }
.picture { grid-column: 3; grid-row: 1 / 5; display: flex; flex-direction: column; align-items: center; }
.picture label { padding-right: 14px; }
.preview { width: 100%; height: 118px; margin-bottom: 6px; border: 1px solid #8a8a8a; }
.userform #ruta { height: 13px; margin-bottom: 7px; }

.raised {
    width: 59px;
    height: 22px;
    background: #f0f0f0;
    border: 1px solid #fff;
    border-right-color: #777;
    border-bottom-color: #777;
    box-shadow: 0 0 1px #999;
}

.pick { width: 22px; margin: 10px 0 0 5px; }
.register { width: 92px; margin-top: 16px; align-self: flex-end; }

.grade {
    display: grid;
    grid-template-columns: 112px 112px 123px 1fr;
    margin-top: 11px;
    padding: 14px 6px 18px 13px;
}

.grade legend { margin-left: -8px; }
.grade label { display: flex; align-items: center; gap: 3px; }
.grade input { appearance: none; width: 7px; height: 7px; border: 1px solid #666; border-right-color: #ddd; border-bottom-color: #ddd; border-radius: 50%; background: #fff; }

.home {
    display: grid;
    grid-template-columns: 111px 111px;
    gap: 11px 60px;
    margin-top: 16px;
    padding: 6px 6px 11px;
}

.home .address { grid-column: 1 / 3; width: 438px; }

/* headline */
.headline { position: absolute; left: 636px; top: 151px; right: 28px; display: grid; }
.bands, .headline h1 { grid-area: 1 / 1; }
.bands { display: flex; flex-direction: column; gap: 2px; }
.bands div { height: 94px; width: 529px; border-radius: 6px; }
.bands .dark { background: rgba(8, 8, 8, 0.71); }
.bands .green1 { background: rgba(0, 102, 20, 0.8); }
.bands .green2 { width: 100%; background: rgba(0, 132, 50, 0.87); }
.bands .green3 { background: rgba(0, 132, 48, 0.93); }

h1 {
    margin: 0;
    padding: 4px 0 0 35px;
    color: #fff;
    font-family: "DejaVu Sans", sans-serif;
    font-weight: bold;
    font-size: 86px;
    line-height: 93px;
    -webkit-text-stroke: 2px #fff;
    white-space: nowrap;
}

.checks { position: absolute; left: 545px; top: 248px; display: flex; flex-direction: column; gap: 11px; }
.checks svg { width: 86px; height: 86px; border-radius: 50%; background: #000; fill: #00d000; stroke: none; }
```
FILE: script.js
```js
const columns = 15;
const heads = ['', 'Código', '', '', '', '', '', 'Sexo', 'Teléfono', 'Grado instrucción', 'Departamento', 'Ciudad', 'Dirección', 'Imagen'];
const body = document.getElementById('rows');

for (let r = 1; r <= 25; r++) {
    const row = document.createElement('tr');
    if (r === 3) row.className = 'tall';
    let html = `<th${r === 8 ? ' class="picked"' : ''}>${r}</th>`;
    for (let c = 0; c < columns; c++) {
        const inTable = c > 0 && c < 14;
        if (r === 4 && inTable) {
            html += `<td class="head"><div><span>${heads[c]}</span><button aria-label="Filtro">▼</button></div></td>`;
        } else if (r === 5 && inTable) {
            html += '<td class="data"></td>';
        } else {
            html += '<td></td>';
        }
    }
    row.innerHTML = html;
    body.appendChild(row);
}
```
